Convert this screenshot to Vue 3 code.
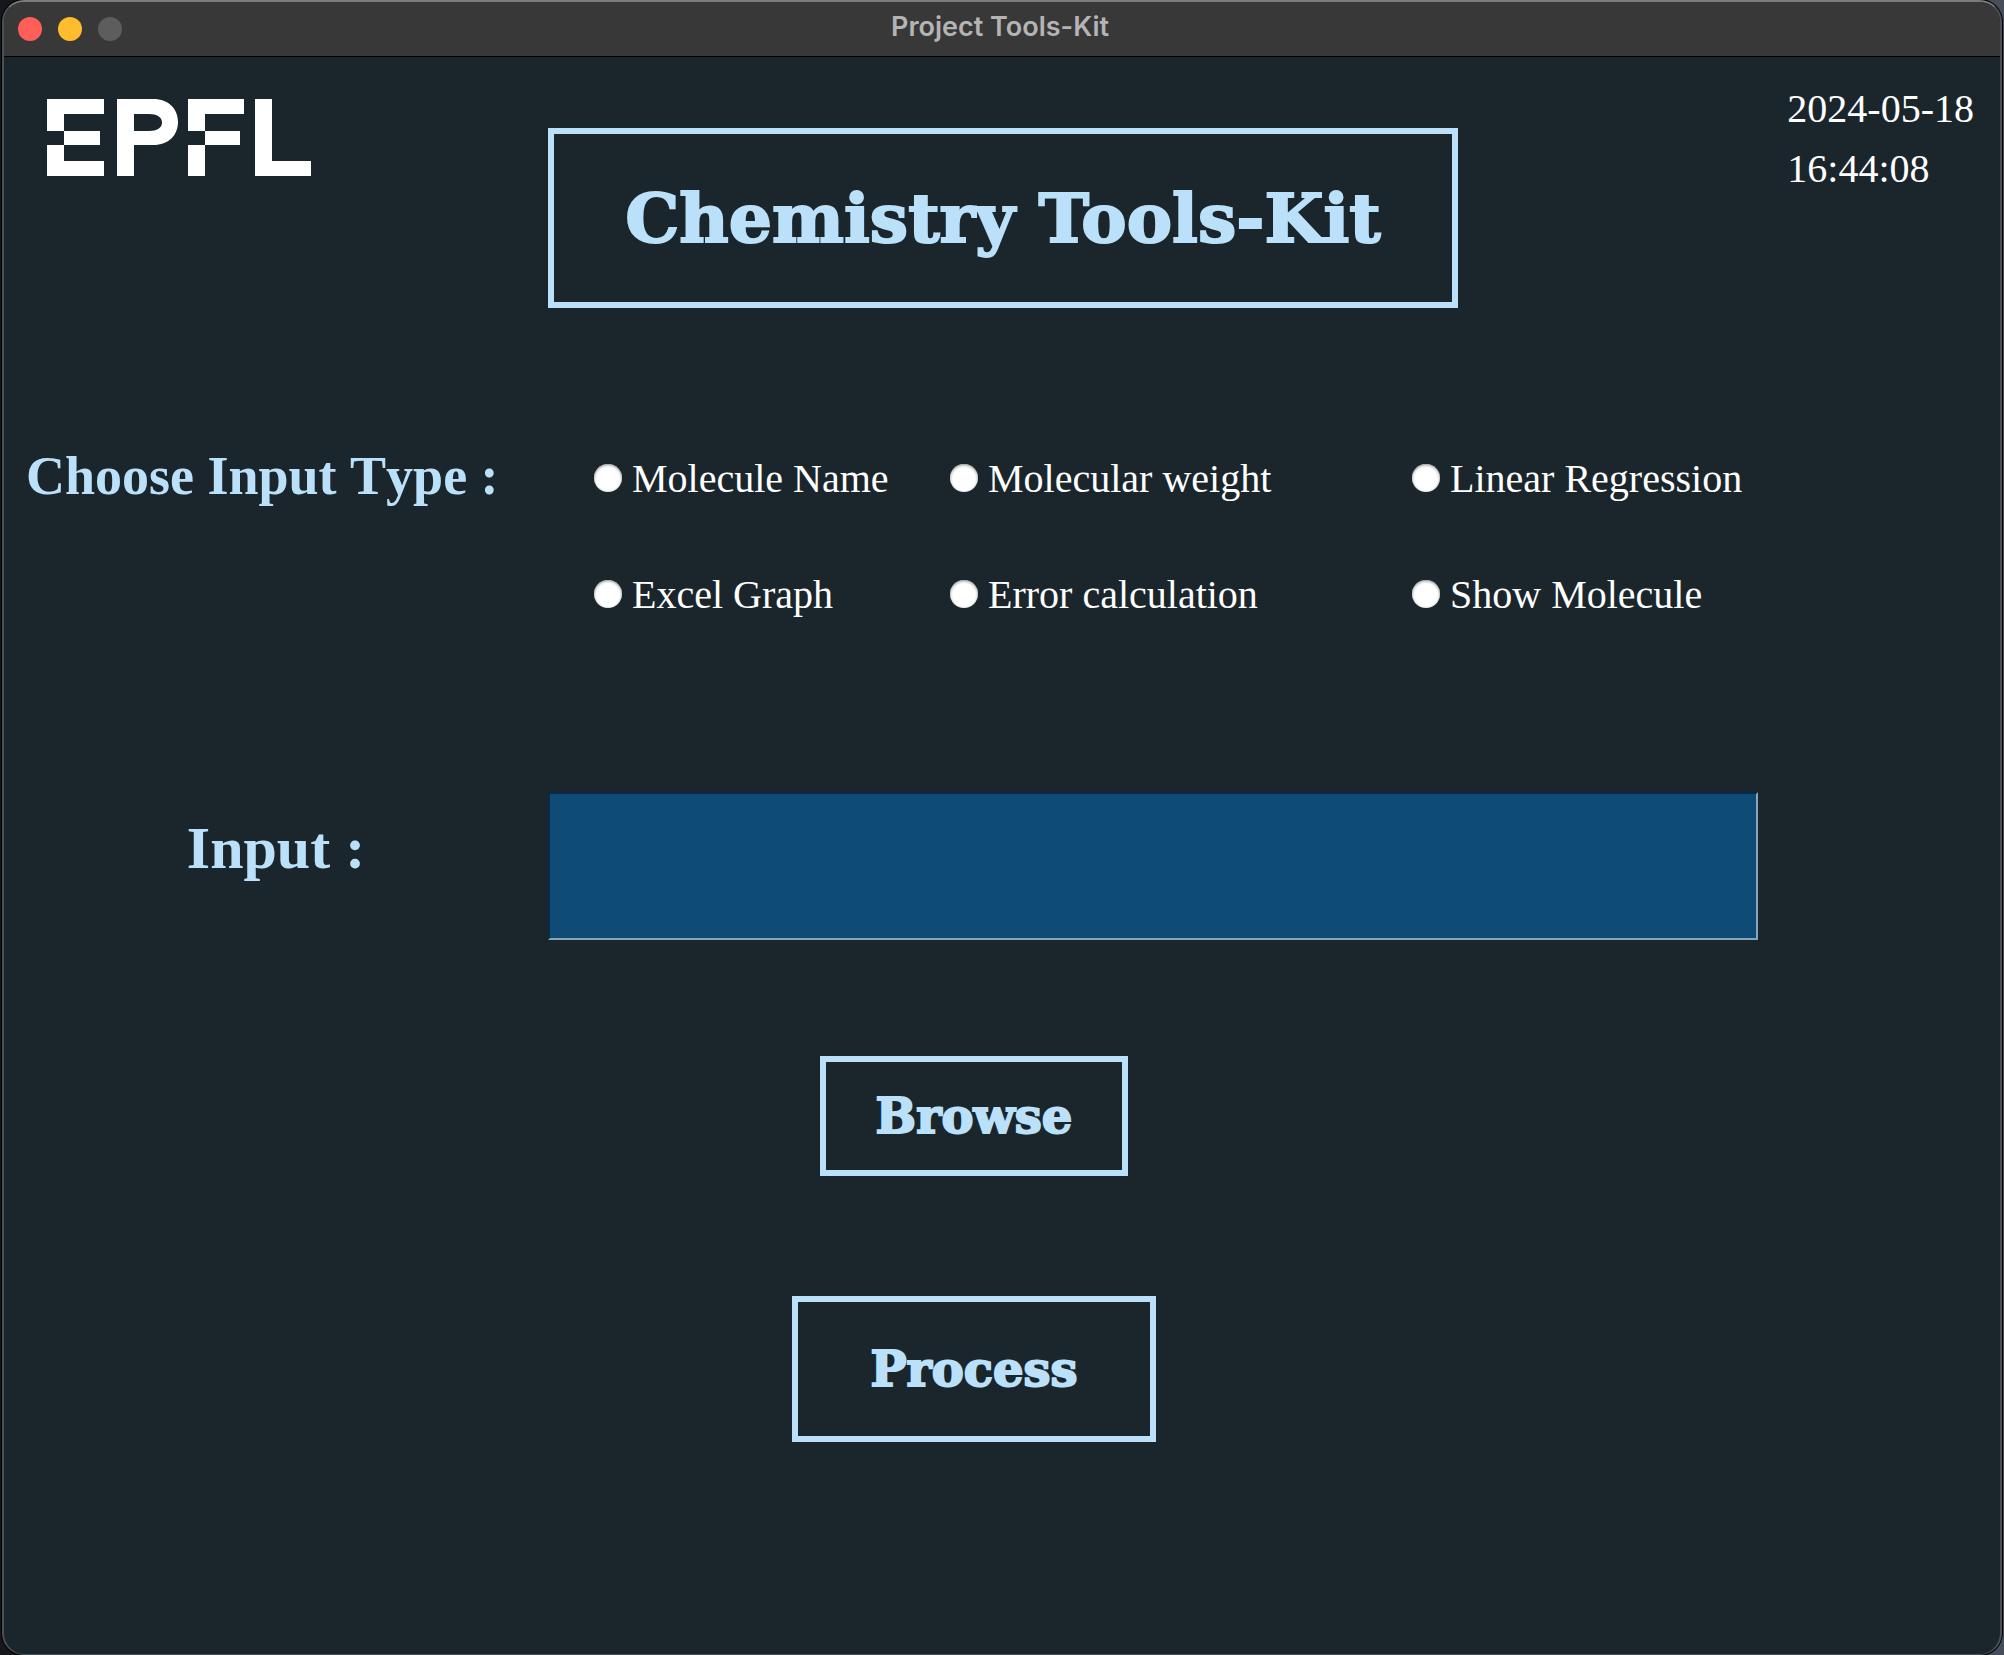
<script setup>
import { ref } from 'vue'

const inputTypes = [
  'Molecule Name',
  'Molecular weight',
  'Linear Regression',
  'Excel Graph',
  'Error calculation',
  'Show Molecule',
]
const inputType = ref('')
const input = ref('')
</script>

<template>
  <div class="desktop">
    <div class="window">
      <header class="titlebar">
        <div class="lights">
          <button class="light close" type="button" aria-label="Close"></button>
          <button class="light minimize" type="button" aria-label="Minimize"></button>
          <button class="light zoom" type="button" aria-label="Zoom" disabled></button>
        </div>
        <span class="window-title">Project Tools-Kit</span>
      </header>

      <main>
        <div class="top">
          <svg class="logo" width="264" height="77" viewBox="0 0 264 77" fill="#fff" role="img" aria-label="EPFL">
            <path d="M0 0H57V15H17V32H0Z M17 32H53V46H17Z M0 46H17V62H57V77H0Z" />
            <path fill-rule="evenodd" d="M70 0H106C122 0 131 10 131 23C131 36 122 46 106 46H87V77H70Z M87 15V32H102C110 32 115 29 115 23.500C115 18 110 15 102 15Z" />
            <path d="M141 0H197V15H158V32H141Z M158 32H193V46H158Z M141 46H158V77H141Z" />
            <path d="M208 0H225V62H264V77H208Z" />
          </svg>
          <h1 class="banner">Chemistry Tools-Kit</h1>
          <div class="clock">
            <time>2024-05-18</time>
            <time>16:44:08</time>
          </div>
        </div>

        <section class="types">
          <h2 id="type-label">Choose Input Type :</h2>
          <div class="options" role="radiogroup" aria-labelledby="type-label">
            <label v-for="type in inputTypes" :key="type" class="option">
              <input v-model="inputType" type="radio" name="input-type" :value="type" />
              <span>{{ type }}</span>
            </label>
          </div>
        </section>

        <section class="entry">
          <label for="entry-field">Input :</label>
          <input id="entry-field" v-model="input" type="text" autocomplete="off" />
        </section>

        <div class="actions">
          <button class="browse" type="button">Browse</button>
          <button class="process" type="button">Process</button>
        </div>
      </main>
    </div>
  </div>
</template>

<style>
body {
  margin: 0;
  background: #1b262c;
}
</style>

<style scoped>
* {
  box-sizing: border-box;
}

.desktop {
  display: flex;
  min-height: 100vh;
  padding: 0 2px;
  background: linear-gradient(to right, #15171b 50%, #454e59 50%);
  font-family: "Liberation Serif", "Times New Roman", serif;
}

.window {
  flex: 1;
  overflow: hidden;
  border: 2px solid #4b5256;
  border-top-color: #7b7b7b;
  border-bottom-width: 1px;
  border-radius: 22px;
  background: #1b262c;
  box-shadow: 0 0 0 1px #000;
}

.titlebar {
  display: grid;
  grid-template-columns: 1fr auto 1fr;
  align-items: center;
  height: 55px;
  border-bottom: 1px solid #000;
  background: #383838;
}

.lights {
  display: flex;
  gap: 16px;
  padding-left: 14px;
}

.light {
  width: 24px;
  height: 24px;
  padding: 0;
  border: 0;
  border-radius: 50%;
}

.close {
  background: #ff5f57;
}

.minimize {
  background: #febc2e;
}

.zoom {
  background: #5d5d5d;
}

.window-title {
  padding: 0 4px 4px 0;
  color: #b4b4b4;
  font: 600 27px/32px Inter, sans-serif;
}

.top {
  display: grid;
  grid-template-columns: 544fr 910fr 542fr;
  align-items: start;
}

.logo {
  margin: 42px 0 0 43px;
}

.banner,
.actions button {
  border: 6px solid #bbe1fa;
  background: none;
  color: #bbe1fa;
  font-family: "DejaVu Serif", serif;
  font-weight: 700;
  white-space: nowrap;
  -webkit-text-stroke: 2px #bbe1fa;
}

.banner {
  display: flex;
  align-items: center;
  justify-content: center;
  height: 180px;
  margin: 71px 0 0;
  font-size: 68px;
}

.clock {
  display: flex;
  flex-direction: column;
  justify-self: end;
  padding: 22px 26px 0 0;
  color: #fff;
  font-size: 40px;
  line-height: 60px;
}

.types {
  display: grid;
  grid-template-columns: 590fr 1406fr;
  margin-top: 138px;
}

h2 {
  margin: 0;
  padding-left: 22px;
  color: #bbe1fa;
  font-size: 54px;
  font-kerning: none;
  line-height: 60px;
  white-space: nowrap;
}

.options {
  display: grid;
  grid-template-columns: 356fr 462fr 588fr;
  gap: 69px 0;
  padding-top: 8px;
}

.option {
  display: flex;
  align-items: center;
  gap: 10px;
  color: #fff;
  font-size: 40px;
  line-height: 44px;
  white-space: nowrap;
}

.option span {
  padding-top: 3px;
}

.option input {
  width: 28px;
  height: 28px;
  margin: 0;
  appearance: none;
  border-radius: 50%;
  background: #fff;
  box-shadow: inset 0 1px 3px #8c8c8c;
}

.option input:checked {
  border: 8px solid #0a7aff;
}

.entry {
  display: grid;
  grid-template-columns: 544fr 1210fr 242fr;
  align-items: start;
  margin-top: 175px;
}

.entry label {
  padding-top: 22px;
  color: #bbe1fa;
  font-size: 60px;
  font-weight: 700;
  line-height: 68px;
  text-align: center;
}

.entry input {
  width: 100%;
  height: 148px;
  padding: 0 16px;
  border: 2px solid;
  border-color: #062a48 #87a6ba #87a6ba #062a48;
  border-radius: 0;
  outline: 0;
  background: #0f4c75;
  color: #fff;
  font: 40px "Liberation Serif", serif;
}

.actions {
  display: flex;
  flex-direction: column;
  align-items: center;
  gap: 120px;
  padding: 116px 56px 120px 0;
}

.actions button {
  font-size: 48px;
}

.browse {
  width: 308px;
  height: 120px;
}

.process {
  width: 364px;
  height: 146px;
}
</style>
